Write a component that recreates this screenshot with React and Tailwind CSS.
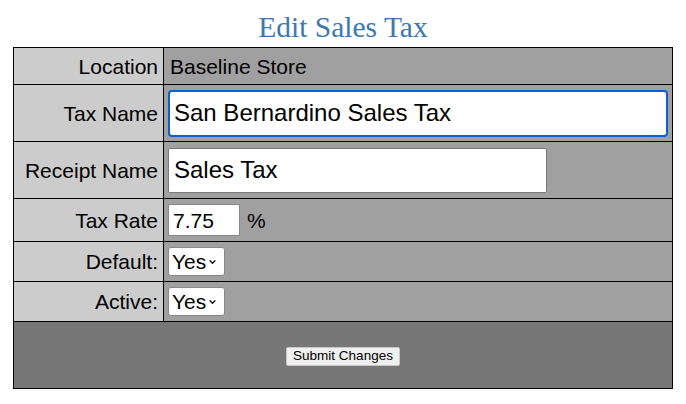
import React from 'react';

const labelCell = 'bg-[#cccccc] border border-black text-right pr-[5px] pl-[4px] whitespace-nowrap';
const valueCell = 'bg-[#a0a0a0] border border-black pl-[4px] text-left';

const Chevron = () => (
  <svg width="9" height="6" viewBox="0 0 9 6" className="ml-[2px] mt-[1px]">
    <path d="M2 1.8 L4.5 4.3 L7 1.8" fill="none" stroke="#111" strokeWidth="1.3" strokeLinecap="round" strokeLinejoin="round" />
  </svg>
);

const YesSelect = () => (
  <div className="inline-flex items-center h-[29px] w-[57px] bg-white border border-[#8a8a8a] rounded-[3px] pl-[3px] pr-[3px] text-[21px] leading-none">
    <span>Yes</span>
    <Chevron />
  </div>
);

const App = () => {
  return (
    <div className="w-[686px] h-[404px] bg-white text-black font-['Liberation_Sans',Arial,sans-serif]">
      <h1 className="h-[47px] pt-[10px] text-center text-[29.5px] leading-[34px] text-[#3d79ad] font-['Liberation_Serif','Times_New_Roman',serif]">
        Edit Sales Tax
      </h1>
      <table className="ml-[13px] w-[660px] border-collapse border border-black text-[21px] leading-none">
        <tbody>
          <tr className="h-[37px]">
            <td className={`${labelCell} w-[150px]`}>Location</td>
            <td className={valueCell}>
              <span className="pl-[2px]">Baseline Store</span>
            </td>
          </tr>
          <tr className="h-[57px]">
            <td className={labelCell}>Tax Name</td>
            <td className={valueCell}>
              <div className="w-[500px] h-[47px] bg-white border-2 border-[#0b5fd1] rounded-[4px] flex items-center pl-[4px] text-[24px]">
                San Bernardino Sales Tax
              </div>
            </td>
          </tr>
          <tr className="h-[57px]">
            <td className={labelCell}>Receipt Name</td>
            <td className={valueCell}>
              <div className="w-[379px] h-[45px] bg-white border border-[#7a7a7a] rounded-[2px] flex items-center pl-[5px] text-[24px]">
                Sales Tax
              </div>
            </td>
          </tr>
          <tr className="h-[43px]">
            <td className={labelCell}>Tax Rate</td>
            <td className={valueCell}>
              <div className="flex items-center">
                <div className="w-[72px] h-[32px] bg-white border border-[#8a8a8a] rounded-[2px] flex items-center pl-[4px] text-[21px]">
                  7.75
                </div>
                <span className="ml-[7px]">%</span>
              </div>
            </td>
          </tr>
          <tr className="h-[40px]">
            <td className={labelCell}>Default:</td>
            <td className={valueCell}>
              <YesSelect />
            </td>
          </tr>
          <tr className="h-[40px]">
            <td className={labelCell}>Active:</td>
            <td className={valueCell}>
              <YesSelect />
            </td>
          </tr>
          <tr className="h-[67px]">
            <td colSpan={2} className="bg-[#777777] border border-black text-center pb-[2px]">
              <button
                type="button"
                className="h-[19px] px-[6px] bg-[#efefef] border border-[#c8c8c8] rounded-[2px] text-[13.5px] leading-none text-black font-['Liberation_Sans',Arial,sans-serif]"
              >
                Submit Changes
              </button>
            </td>
          </tr>
        </tbody>
      </table>
    </div>
  );
};

export default App;
